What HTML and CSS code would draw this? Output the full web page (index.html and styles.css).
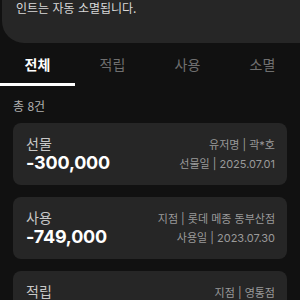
FILE: index.html
```html
<!DOCTYPE html>
<html lang="ko">
<head>
<meta charset="utf-8">
<link rel="stylesheet" href="styles.css">
</head>
<body>
<div class="notice">
  <p class="notice-prev">포인트는 유효기간이 지나면 해당 포</p>
  <p class="notice-text">인트는 자동 소멸됩니다.</p>
</div>
<nav class="tabs">
  <div class="tab active">전체</div>
  <div class="tab">적립</div>
  <div class="tab">사용</div>
  <div class="tab">소멸</div>
</nav>
<div class="count">총 8건</div>
<div class="list">
  <div class="card">
    <div class="left">
      <div class="type">선물</div>
      <div class="amount">-300,000</div>
    </div>
    <div class="right">
      <div>유저명 | 곽*호</div>
      <div>선물일 | 2025.07.01</div>
    </div>
  </div>
  <div class="card">
    <div class="left">
      <div class="type">사용</div>
      <div class="amount">-749,000</div>
    </div>
    <div class="right">
      <div>지점 | 롯데 메종 동부산점</div>
      <div>사용일 | 2023.07.30</div>
    </div>
  </div>
  <div class="card">
    <div class="left">
      <div class="type">적립</div>
      <div class="amount">+12,000</div>
    </div>
    <div class="right">
      <div>지점 | 영통점</div>
      <div>적립일 | 2023.07.12</div>
    </div>
  </div>
</div>
</body>
</html>
```

FILE: styles.css
```css
html, body {
  margin: 0;
  padding: 0;
  background: #111111;
  height: 300px;
  overflow: hidden;
  font-family: "Noto Sans CJK KR", "Noto Sans", sans-serif;
}
.notice {
  margin-left: 2px;
  height: 43px;
  background: #262626;
  border-bottom-left-radius: 22px;
  overflow: hidden;
  box-sizing: border-box;
  padding-left: 14px;
}
.notice p {
  margin: 0;
  font-size: 12px;
  line-height: 18px;
  color: #d8d8d8;
}
.notice-prev {
  margin-top: -15px !important;
  line-height: 14px !important;
}
.tabs {
  display: flex;
  height: 43px;
}
.tab {
  flex: 1;
  display: flex;
  align-items: center;
  justify-content: center;
  font-size: 14px;
  color: #6f6f6f;
  padding-top: 2px;
  box-sizing: border-box;
  border-bottom: 3px solid transparent;
}
.tab.active {
  color: #ffffff;
  font-weight: 700;
  border-bottom-color: #ffffff;
}
.count {
  margin: 12px 13px 0;
  font-size: 12px;
  line-height: 16px;
  color: #b0b0b0;
}
.list {
  display: flex;
  flex-direction: column;
  gap: 12px;
  margin: 9px 13px 0;
}
.card {
  height: 62px;
  flex: none;
  background: #262626;
  border-radius: 8px;
  display: flex;
  justify-content: space-between;
  align-items: center;
  padding: 0 12px 0 13px;
}
.type {
  font-size: 14px;
  line-height: 18px;
  color: #c8c8c8;
}
.amount {
  font-family: "Inter", "Noto Sans CJK KR", sans-serif;
  font-size: 18px;
  font-weight: 700;
  line-height: 22px;
  color: #ffffff;
  letter-spacing: -0.2px;
}
.right {
  display: flex;
  flex-direction: column;
  align-items: flex-end;
  gap: 3px;
  font-size: 11px;
  line-height: 16px;
  color: #9a9a9a;
  font-family: "Inter", "Noto Sans CJK KR", sans-serif;
}
```
